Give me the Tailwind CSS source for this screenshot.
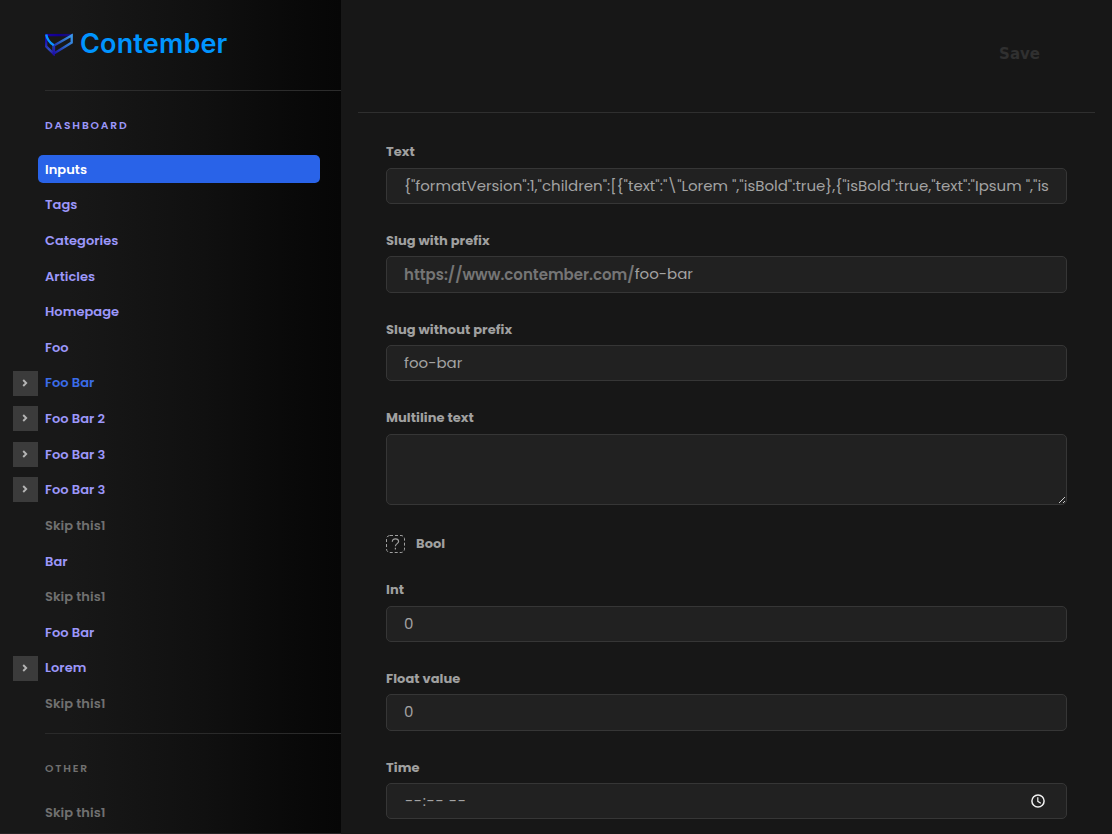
<!DOCTYPE html>
<html lang="en">
<head>
<meta charset="utf-8">
<title>Contember</title>
<script src="https://cdn.jsdelivr.net/npm/@tailwindcss/browser@4"></script>
</head>
<body class="h-[834px] w-[1112px] overflow-hidden bg-[#171717] font-['Poppins','Inter',sans-serif]">
<div class="flex h-full">
  <aside class="flex h-full w-[341px] shrink-0 flex-col border-b border-[#242224] bg-linear-to-r from-[#181818] from-20% via-[#101010] via-60% to-[#060606]">
    <header class="ml-[45px] flex h-[91px] shrink-0 items-start gap-[7px] border-b border-[#2c2c2c] pt-[30px]">
      <svg class="mt-[3px] shrink-0" width="28" height="23" viewBox="0 0 28 23" fill="none">
        <defs>
          <linearGradient id="a" x1="0" y1="0" x2="28" y2="0" gradientUnits="userSpaceOnUse"><stop stop-color="#1b00a8"/><stop offset=".5" stop-color="#12008c"/><stop offset="1" stop-color="#1c1478"/></linearGradient>
          <linearGradient id="b" x1="8" y1="20" x2="28" y2="3" gradientUnits="userSpaceOnUse"><stop stop-color="#1c0fa8"/><stop offset=".5" stop-color="#2c62c4"/><stop offset="1" stop-color="#3a9cf0"/></linearGradient>
          <linearGradient id="c" x1="1" y1="8" x2="8" y2="21" gradientUnits="userSpaceOnUse"><stop stop-color="#1a0cb0"/><stop offset=".6" stop-color="#2f4fc4"/><stop offset="1" stop-color="#2210a0"/></linearGradient>
        </defs>
        <path d="M0 2.1H27" stroke="url(#a)" stroke-width="2.4"/>
        <path d="M1.2 2V13.4L8.6 20.8V12" stroke="url(#c)" stroke-width="2.3"/>
        <path d="M9 12.6L26.7 2.4V9.6L9 20.4Z" stroke="url(#b)" stroke-width="2.3"/>
        <path d="M1.2 1.5C2 6 4.5 9.7 8.8 12.2" stroke="#0a94ff" stroke-width="2.3"/>
      </svg>
      <span class="font-['Inter',sans-serif] text-[27px] leading-7 font-semibold tracking-[.17px] text-[#0094ff]">Contember</span>
    </header>
    <h2 class="mt-[27px] ml-[45px] text-[10.7px] leading-[15px] font-semibold tracking-[1.85px] text-[#9c97fa]">DASHBOARD</h2>
    <ul class="mt-[21.7px] ml-[13px] flex flex-col gap-[7.64px] text-[13px] leading-[29px] font-semibold tracking-[.05px] text-[#9c97fa]">
      <li class="ml-[25px] h-7 w-[282px] rounded-[5px] bg-[#2963e8] pl-[7px] text-white">Inputs</li>
      <li class="h-7 pl-8">Tags</li>
      <li class="h-7 pl-8">Categories</li>
      <li class="h-7 pl-8">Articles</li>
      <li class="h-7 pl-8">Homepage</li>
      <li class="h-7 pl-8">Foo</li>
      <li class="flex h-7 gap-[7px] text-[#3b6ce8]"><span class="mt-[2.3px] flex size-[25px] items-start bg-[#3b3b3b] pt-2 pl-[9px]"><svg width="6" height="8" viewBox="0 0 6 8" fill="none" stroke="#b4b4b4" stroke-width="1.9"><path d="M1.2 1L4.2 4L1.2 7"/></svg></span>Foo Bar</li>
      <li class="flex h-7 gap-[7px]"><span class="mt-[2.1px] flex size-[25px] items-start bg-[#3b3b3b] pt-2 pl-[9px]"><svg width="6" height="8" viewBox="0 0 6 8" fill="none" stroke="#b4b4b4" stroke-width="1.9"><path d="M1.2 1L4.2 4L1.2 7"/></svg></span>Foo Bar 2</li>
      <li class="flex h-7 gap-[7px]"><span class="mt-[2.1px] flex size-[25px] items-start bg-[#3b3b3b] pt-2 pl-[9px]"><svg width="6" height="8" viewBox="0 0 6 8" fill="none" stroke="#b4b4b4" stroke-width="1.9"><path d="M1.2 1L4.2 4L1.2 7"/></svg></span>Foo Bar 3</li>
      <li class="flex h-7 gap-[7px]"><span class="mt-[2.1px] flex size-[25px] items-start bg-[#3b3b3b] pt-2 pl-[9px]"><svg width="6" height="8" viewBox="0 0 6 8" fill="none" stroke="#b4b4b4" stroke-width="1.9"><path d="M1.2 1L4.2 4L1.2 7"/></svg></span>Foo Bar 3</li>
      <li class="h-7 pl-8 text-[#707070]">Skip this1</li>
      <li class="h-7 pl-8">Bar</li>
      <li class="h-7 pl-8 text-[#707070]">Skip this1</li>
      <li class="h-7 pl-8">Foo Bar</li>
      <li class="flex h-7 gap-[7px]"><span class="mt-[2.5px] flex size-[25px] items-start bg-[#3b3b3b] pt-2 pl-[9px]"><svg width="6" height="8" viewBox="0 0 6 8" fill="none" stroke="#b4b4b4" stroke-width="1.9"><path d="M1.2 1L4.2 4L1.2 7"/></svg></span>Lorem</li>
      <li class="h-7 pl-8 text-[#707070]">Skip this1</li>
    </ul>
    <div class="mt-[15.7px] ml-[45px] border-t border-[#2a2a2a] pt-[27px]">
      <h2 class="text-[10.7px] leading-[15px] font-semibold tracking-[1.85px] text-[#707070]">OTHER</h2>
      <p class="mt-[22px] text-[13px] leading-[29px] font-semibold tracking-[.05px] text-[#707070]">Skip this1</p>
    </div>
  </aside>

  <main class="flex-1 px-[17px]">
    <div class="flex h-[113px] justify-end border-b border-[#2f2f2f] pt-[44px] pr-[55px]">
      <button class="h-5 font-['DejaVu_Sans',sans-serif] text-[15px] leading-5 font-bold text-[#303030]">Save</button>
    </div>
    <form class="flex flex-col px-7 pt-[30.4px] text-[13px] font-bold tracking-[.06px] text-[#a0a0a0]">
      <label class="leading-[18px]">Text</label>
      <div class="mt-[6.4px] mb-[27.9px] h-[36.3px] overflow-hidden rounded-[5px] border border-[#363636] bg-[#212121] px-[17px] text-[15px] leading-[34px] font-normal tracking-normal whitespace-pre text-[#a3a3a3]">{"formatVersion":1,"children":[{"text":"\"Lorem ","isBold":true},{"isBold":true,"text":"Ipsum ","is</div>
      <label class="leading-[18px]">Slug with prefix</label>
      <div class="mt-[6.4px] mb-[27.9px] flex h-[36.3px] rounded-[5px] border border-[#363636] bg-[#212121] px-[17px] text-[15px] leading-[34px] font-normal tracking-normal text-[#a3a3a3]"><span class="pt-px font-semibold text-[#757575]">https://www.contember.com/</span><span>foo-bar</span></div>
      <label class="leading-[18px]">Slug without prefix</label>
      <div class="mt-[6.4px] mb-[27.9px] h-[36.3px] rounded-[5px] border border-[#363636] bg-[#212121] px-[17px] text-[15px] leading-[34px] font-normal tracking-normal text-[#a3a3a3]">foo-bar</div>
      <label class="leading-[18px]">Multiline text</label>
      <div class="mt-[6.4px] flex h-[71.2px] items-end justify-end rounded-[5px] border border-[#363636] bg-[#212121]">
        <svg width="8" height="8" viewBox="0 0 8 8" fill="none" stroke="#c8c8c8" stroke-width="1"><path d="M1 7L7 1M5 7L7 5"/></svg>
      </div>
      <div class="mt-[30.2px] flex h-[18px] items-center gap-[11px]">
        <svg width="19" height="18" viewBox="0 0 19 18" fill="none" stroke="#a0a0a0"><rect x=".5" y=".5" width="18" height="17" rx="3.5" stroke-dasharray="3 2"/><path stroke-width="1.2" d="M6.3 6.8C6.3 4.7 7.8 3.8 9.4 3.8S12.6 4.9 12.6 6.6C12.6 8.7 9.4 8.6 9.4 11.2M9.4 12.8V14.4"/></svg>
        <span class="leading-[18px]">Bool</span>
      </div>
      <label class="mt-[28.4px] leading-[18px]">Int</label>
      <div class="mt-[6.4px] mb-[27.9px] h-[36.3px] rounded-[5px] border border-[#363636] bg-[#212121] px-[17px] text-[15px] leading-[34px] font-normal tracking-normal text-[#a3a3a3]">0</div>
      <label class="leading-[18px]">Float value</label>
      <div class="mt-[6.4px] mb-[28.2px] h-[36.3px] rounded-[5px] border border-[#363636] bg-[#212121] px-[17px] text-[15px] leading-[34px] font-normal tracking-normal text-[#a3a3a3]">0</div>
      <label class="leading-[18px]">Time</label>
      <div class="mt-[6.1px] flex h-[36.3px] items-center justify-between rounded-[5px] border border-[#363636] bg-[#212121] pr-[21px] pl-[18px] text-[15px] leading-[34px] font-normal tracking-[.6px] text-[#a3a3a3]"><span>--:-- --</span>
        <svg width="14" height="14" viewBox="0 0 14 14" fill="none" stroke="#f2f2f2" stroke-width="1.5"><circle cx="7" cy="7" r="6.1"/><path d="M6.8 3.2V7.3L9.8 9.2" stroke-width="1.2"/></svg>
      </div>
    </form>
  </main>
</div>
</body>
</html>
